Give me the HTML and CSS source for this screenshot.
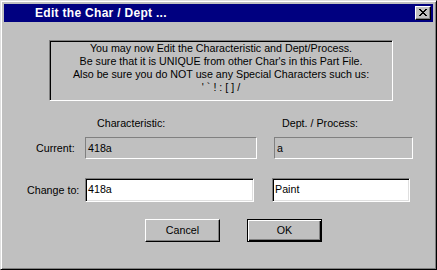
FILE: index.html
```html
<!DOCTYPE html>
<html>
<head>
<meta charset="utf-8">
<link rel="stylesheet" href="styles.css">
</head>
<body>
<div class="window">
  <div class="titlebar">
    <span class="title">Edit the Char / Dept ...</span>
    <span class="close">
      <svg width="8" height="7" viewBox="0 0 8 7"><path d="M0 0h2v1h1v1h2v-1h1v-1h2v1h-1v1h-1v1h-1v1h1v1h1v1h1v1h-2v-1h-1v-1h-2v1h-1v1h-2v-1h1v-1h1v-1h1v-1h-1v-1h-1v-1h-1z" fill="#000"/></svg>
    </span>
  </div>
  <div class="content">
    <div class="msgbox">
      <div class="line">You may now Edit the Characteristic and Dept/Process.</div>
      <div class="line">Be sure that it is UNIQUE from other Char's in this Part File.</div>
      <div class="line">Also be sure you do NOT use any Special Characters such us:</div>
      <div class="line">' ` ! : [ ] /</div>
    </div>
    <div class="headers">
      <span class="h1">Characteristic:</span>
      <span class="h2">Dept. / Process:</span>
    </div>
    <div class="row current">
      <span class="label">Current:</span>
      <div class="static f1">418a</div>
      <div class="static f2">a</div>
    </div>
    <div class="row change">
      <span class="label">Change to:</span>
      <div class="edit f1">418a</div>
      <div class="edit f2">Paint</div>
    </div>
    <div class="buttons">
      <div class="btn">Cancel</div>
      <div class="btn default"><span>OK</span></div>
    </div>
  </div>
</div>
</body>
</html>
```

FILE: styles.css
```css
html, body {
  margin: 0;
  padding: 0;
  background: #c0c0c0;
}
body {
  font-family: "Liberation Sans", Arial, sans-serif;
  font-size: 10.7px;
  color: #000;
}
.window {
  width: 437px;
  height: 270px;
  box-sizing: border-box;
  background: #c0c0c0;
  border-style: solid;
  border-width: 1px;
  border-color: #dfdfdf #000 #000 #dfdfdf;
  box-shadow: inset 1px 1px 0 #fff, inset -1px -1px 0 #808080;
  padding: 3px;
}
.titlebar {
  height: 18px;
  background: #000080;
  display: flex;
  align-items: center;
  justify-content: space-between;
  padding-left: 31px;
  padding-right: 2px;
}
.title {
  color: #fff;
  font-weight: bold;
  font-size: 12px;
  letter-spacing: 0.3px;
}
.close {
  width: 16px;
  height: 14px;
  box-sizing: border-box;
  background: #c0c0c0;
  border-style: solid;
  border-width: 1px;
  border-color: #fff #000 #000 #fff;
  box-shadow: inset -1px -1px 0 #808080;
  display: flex;
  align-items: center;
  justify-content: center;
  padding: 0 1px 1px 0;
}
.close svg { display: block; }
.content {
  display: flex;
  flex-direction: column;
}
.msgbox {
  margin: 18px 0 0 45px;
  width: 344px;
  height: 61px;
  box-sizing: border-box;
  border-style: solid;
  border-width: 1px;
  border-color: #808080 #fff #fff #808080;
  box-shadow: inset 1px 1px 0 #000;
  padding-top: 1px;
  text-align: center;
}
.line {
  line-height: 13px;
  height: 13px;
  white-space: nowrap;
}
.headers {
  margin-top: 16px;
  height: 13px;
  line-height: 13px;
  display: flex;
}
.h1 { margin-left: 93px; width: 185px; }
.row {
  display: flex;
  align-items: center;
}
.current { margin-top: 7px; height: 22px; }
.change { margin-top: 19px; height: 24px; }
.label { white-space: nowrap; }
.current .label { margin-left: 32px; width: 49px; }
.change .label { margin-left: 23px; width: 58px; }
.static {
  height: 22px;
  box-sizing: border-box;
  border-style: solid;
  border-width: 1px;
  border-color: #808080 #fff #fff #808080;
  padding: 3px 0 0 2px;
  line-height: 14px;
}
.current .f1 { width: 172px; }
.current .f2 { width: 139px; margin-left: 17px; }
.edit {
  height: 24px;
  box-sizing: border-box;
  background: #fff;
  border-style: solid;
  border-width: 1px;
  border-color: #808080 #fff #fff #808080;
  box-shadow: inset 1px 1px 0 #000, inset -1px -1px 0 #dfdfdf;
  padding: 3px 0 0 2px;
  line-height: 14px;
}
.change .f1 { width: 169px; }
.change .f2 { width: 138px; margin-left: 18px; }
.buttons {
  display: flex;
  margin-top: 17px;
  margin-left: 141px;
  gap: 27px;
}
.btn {
  width: 75px;
  height: 23px;
  box-sizing: border-box;
  border-style: solid;
  border-width: 1px;
  border-color: #fff #000 #000 #fff;
  box-shadow: inset -1px -1px 0 #808080;
  display: flex;
  align-items: center;
  justify-content: center;
  padding-bottom: 1px;
}
.btn.default {
  border-color: #000;
  box-shadow: inset 1px 1px 0 #fff, inset -1px -1px 0 #000, inset -2px -2px 0 #808080;
}
```
